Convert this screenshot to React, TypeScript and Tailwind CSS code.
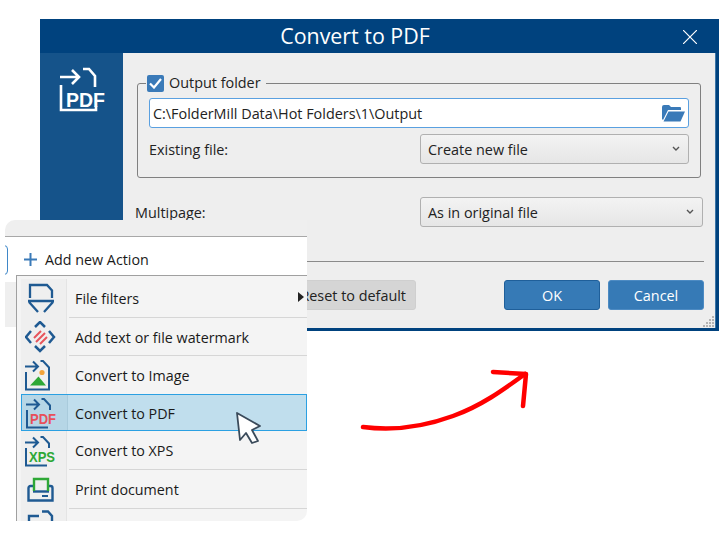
import { ReactNode } from "react";

const font = { fontFamily: '"Open Sans", "Noto Sans", sans-serif' };

const blue = "#1f5a92";

const Arrow = () => <path d="M0 7.500h13M8 2.500l5 5-5 5" fill="none" stroke={blue} strokeWidth="2" />;

const FilterIcon = () => (
  <svg width="30" height="32" viewBox="0 0 30 32" fill="none" stroke={blue} strokeWidth="2.300">
    <path d="M4 15V2h17l5 5.500V15" />
    <path d="M2 18h26M3 19l9 10M27 19l-9 10" />
  </svg>
);

const WatermarkIcon = () => (
  <svg width="32" height="32" viewBox="0 0 32 32" fill="none">
    <path d="M6 10l-5 6 5 6M10 6l5-5 5 5M24 10l5 6-5 6M10 25l5 5 5-5" stroke={blue} strokeWidth="2.500" />
    <path d="M9 17l7-7M11 21l9-9M15 23l7-7" stroke="#e7555c" strokeWidth="2" />
  </svg>
);

const ImageIcon = () => (
  <svg width="32" height="32" viewBox="0 0 32 32" fill="none">
    <path d="M1 13v17.500h23V8.500L18 2h-2.500" stroke={blue} strokeWidth="2" />
    <Arrow />
    <path d="M5 26.500l8.500-9 7.500 9z" fill="#2ea836" />
    <circle cx="17" cy="13.500" r="2.600" fill="#f2a33a" />
  </svg>
);

const DocLabelIcon = ({ label, color }: { label: string; color: string }) => (
  <svg width="36" height="32" viewBox="0 0 36 32" fill="none" className="-mr-[4px]">
    <path d="M1 13v17.500h21M15.500 2H18l6 6.500V13" stroke={blue} strokeWidth="2" />
    <Arrow />
    <text x="4" y="26.500" fontSize="15" fontWeight="700" fill={color} fontFamily="Liberation Sans" textLength="26" lengthAdjust="spacingAndGlyphs">
      {label}
    </text>
  </svg>
);

const PrintIcon = () => (
  <svg width="28" height="26" viewBox="0 0 28 26" fill="none">
    <path d="M6 9h-2.500a2 2 0 00-2 2v12.500h24V11a2 2 0 00-2-2H22" stroke={blue} strokeWidth="2.400" />
    <path d="M6 14.500h16" stroke={blue} strokeWidth="2.400" />
    <path d="M7 14V2h14v12" stroke="#2ea836" strokeWidth="2.400" />
    <path d="M15 19h6" stroke={blue} strokeWidth="2" />
  </svg>
);

const PartialIcon = () => (
  <svg width="28" height="11" viewBox="0 0 28 11" fill="none" stroke={blue} strokeWidth="2.400">
    <path d="M2 11V6h10M15 1.500h6l4 4.500v5" />
  </svg>
);

const MenuRow = ({
  icon,
  label,
  height,
  active,
  separator,
  children,
}: {
  icon: ReactNode;
  label: string;
  height: string;
  active?: boolean;
  separator?: boolean;
  children?: ReactNode;
}) => (
  <div className={`flex shrink-0 relative ${height}`}>
    {active && <div className="absolute inset-0 bg-[#c0deed] border border-[#2ba0e2]" />}
    <div className={`relative w-[46px] shrink-0 flex items-center justify-center pr-[6px] border-r ${active ? "bg-[#b6d6e6] border-[#a9cbdc] my-[1px] ml-[1px] -mr-[1px]" : "bg-[#efefef] border-[#e4e4e4]"}`}>{icon}</div>
    <div className={`relative flex-1 ml-[2px] flex items-center pl-[6px] pt-[2px] text-[14.300px] text-[#1a1a1a] ${separator ? "border-b border-[#d6d6d6]" : ""}`}>
      {label}
      {children}
    </div>
  </div>
);

const Select = ({ value, className }: { value: string; className: string }) => (
  <div className={`h-[30px] flex items-center justify-between pl-[7px] pr-[8px] pt-[2px] rounded-[3px] border border-[#b0b0b0] bg-gradient-to-b from-[#f3f3f3] to-[#e6e6e6] text-[#222] ${className}`}>
    {value}
    <svg className="-mt-[2px]" width="8" height="6" viewBox="0 0 8 6" fill="none" stroke="#555" strokeWidth="1.400">
      <path d="M1 1l3 3 3-3" />
    </svg>
  </div>
);

export default function App() {
  return (
    <div className="relative w-[724px] h-[557px] bg-white overflow-hidden" style={font}>
      {/* Dialog window */}
      <div className="absolute left-[40px] top-[19px] w-[679px] h-[312px] flex flex-col bg-[#00427e] pr-[3px] pb-[3px]">
        <div className="h-[34px] shrink-0 pr-[46px] flex items-center justify-center relative text-white text-[21.400px]">
          Convert to PDF
          <svg className="absolute right-[19px] top-[11px]" width="14" height="14" viewBox="0 0 14 14" stroke="#fff" strokeWidth="1.200">
            <path d="M0 0l14 14M14 0L0 14" />
          </svg>
        </div>
        <div className="flex flex-1 min-h-0 bg-[#eeeeee] border-r border-[#3a75a8] relative">
          <div className="w-[83px] shrink-0 bg-[#15538a] flex justify-center pt-[14px] pl-[2px]">
            <svg width="50" height="46" viewBox="0 0 50 46" fill="none" className="-mr-[3px]">
              <path d="M2 18v25h35v-4" stroke="#fff" strokeWidth="2.600" />
              <path d="M24 2h6l6 7v11" stroke="#fff" strokeWidth="2.600" />
              <path d="M1 10h19M13 3l7 7-7 7" stroke="#fff" strokeWidth="2.600" />
              <text x="7" y="40" fontSize="21" fontWeight="700" fill="#fff" fontFamily="Liberation Sans" textLength="39" lengthAdjust="spacingAndGlyphs">
                PDF
              </text>
            </svg>
          </div>
          <div className="flex-1 pl-[12px] pr-[11px] pt-[30px] text-[14.400px] text-[#222]">
            <div className="relative ml-[2px] w-[564px] h-[95px] border border-[#808080] rounded-[3px] px-[11px] pt-[14px]">
              <div className="absolute left-[8px] -top-[10px] flex items-center gap-[5px] bg-[#eeeeee] pl-[1px] pr-[5px] h-[18px]">
                <span className="w-[17px] h-[17px] rounded-[2px] bg-[#3a7ab8] flex items-center justify-center">
                  <svg width="13" height="11" viewBox="0 0 13 11" fill="none" stroke="#fff" strokeWidth="2.200">
                    <path d="M1 5.500l4 4L12 1" />
                  </svg>
                </span>
                <span>Output folder</span>
              </div>
              <div className="h-[30px] flex items-center justify-between pl-[3px] pr-[3px] bg-white rounded-[3px] border border-[#5aa0e0]">
                <span className="pt-[2px]">C:\FolderMill Data\Hot Folders\1\Output</span>
                <svg width="23" height="18" viewBox="0 0 23 18">
                  <path d="M0 3a2 2 0 012-2h5l2 2h9a1 1 0 011 1v2H6L1 16 0 15z" fill="#3a7ab8" />
                  <path d="M6.500 7.500H23l-4.500 10H1.500z" fill="#3a7ab8" />
                </svg>
              </div>
              <div className="flex items-center justify-between mt-[6px]">
                <span className="pt-[2px]">Existing file:</span>
                <Select value="Create new file" className="w-[269px]" />
              </div>
            </div>
            <div className="flex items-center justify-between mt-[19px] mr-[1px]">
              <span className="pt-[2px]">Multipage:</span>
              <Select value="As in original file" className="w-[283px]" />
            </div>
            <div className="h-px bg-[#8a8a8a] mt-[34px] ml-[2px]" />
            <div className="flex items-center justify-end mt-[18px] gap-[8px]">
              <div className="mr-[80px] w-[150px] h-[30px] pt-[2px] rounded-[3px] bg-[#d5d5d5] border border-[#cfcfcf] flex items-center justify-end pr-[9px]">
                Reset to default
              </div>
              <div className="w-[96px] h-[30px] pt-[2px] rounded-[3px] bg-[#367ab6] border border-[#1f5f9a] text-white flex items-center justify-center">OK</div>
              <div className="w-[96px] h-[30px] pt-[2px] rounded-[3px] bg-[#367ab6] border border-[#4d8bc3] text-white flex items-center justify-center">Cancel</div>
            </div>
          </div>
          <svg className="absolute right-0 bottom-0" width="14" height="14" viewBox="0 0 14 14" fill="#b4b4b4">
            <path d="M11 2h2v2h-2zM8 5h2v2H8zM11 5h2v2h-2zM5 8h2v2H5zM8 8h2v2H8zM11 8h2v2h-2zM2 11h2v2H2zM5 11h2v2H5zM8 11h2v2H8zM11 11h2v2h-2z" />
          </svg>
        </div>
      </div>

      {/* Curved red arrow */}
      <svg className="absolute left-[355px] top-[365px]" width="180" height="70" viewBox="0 0 180 70" fill="none" stroke="#ff0000" strokeWidth="4.500" strokeLinecap="round" strokeLinejoin="round">
        <path d="M8 62c30 4 60 0 90-11 28-10 50-26 72-42" />
        <path d="M138 7l33 2-3 32" />
      </svg>

      {/* Context menu overlay */}
      <div className="absolute left-[5px] top-[220px] w-[302px] h-[301px] bg-white rounded-tl-[10px] rounded-br-[10px] overflow-hidden">
        <div className="h-[16px] bg-[#efefef] border-b border-[#a8a8a8] box-content" />
        <div className="relative h-[38px] flex items-center pl-[19px] pt-[6px] gap-[8px] text-[14.300px] text-[#1a1a1a]">
          <div className="absolute -left-[10px] top-[8px] w-[13px] h-[30px] border border-[#3f87c8] rounded-[4px]" />
          <svg width="13" height="13" viewBox="0 0 13 13" stroke="#3a7ab8" strokeWidth="2">
            <path d="M6.500 0v13M0 6.500h13" />
          </svg>
          <span className="pt-[2px]">Add new Action</span>
        </div>
        <div className="absolute left-0 top-[62px] w-[11px] h-[45px] bg-[#efefef]" />
        <div className="absolute left-[11px] top-[55px] right-0 bottom-0 bg-[#f4f4f4] border-l border-t border-[#a0a0a0] pl-[4px] pt-[3px] flex flex-col overflow-hidden">
          <MenuRow icon={<FilterIcon />} label="File filters" height="h-[39px]" separator>
            <span className="absolute right-[3px] top-[13px] w-0 h-0 border-y-[5px] border-y-transparent border-l-[6px] border-l-[#222]" />
          </MenuRow>
          <MenuRow icon={<WatermarkIcon />} label="Add text or file watermark" height="h-[38px]" separator />
          <MenuRow icon={<ImageIcon />} label="Convert to Image" height="h-[38px]" />
          <MenuRow icon={<DocLabelIcon label="PDF" color="#e7505a" />} label="Convert to PDF" height="h-[37px]" active />
          <MenuRow icon={<DocLabelIcon label="XPS" color="#2ea836" />} label="Convert to XPS" height="h-[39px]" separator />
          <MenuRow icon={<PrintIcon />} label="Print document" height="h-[39px]" separator />
          <div className="flex flex-1">
            <div className="w-[46px] shrink-0 bg-[#efefef] border-r border-[#e4e4e4] flex justify-center items-end pr-[6px]">
              <PartialIcon />
            </div>
          </div>
        </div>
      </div>

      {/* Mouse cursor */}
      <svg className="absolute left-[235px] top-[410px]" width="28" height="36" viewBox="0 0 28 36" fill="#fff" stroke="#3a4a5a" strokeWidth="1.800" strokeLinejoin="round">
        <path d="M2 3l23 13-8 4 6 11-6 2-6-10-6 7z" />
      </svg>
    </div>
  );
}
